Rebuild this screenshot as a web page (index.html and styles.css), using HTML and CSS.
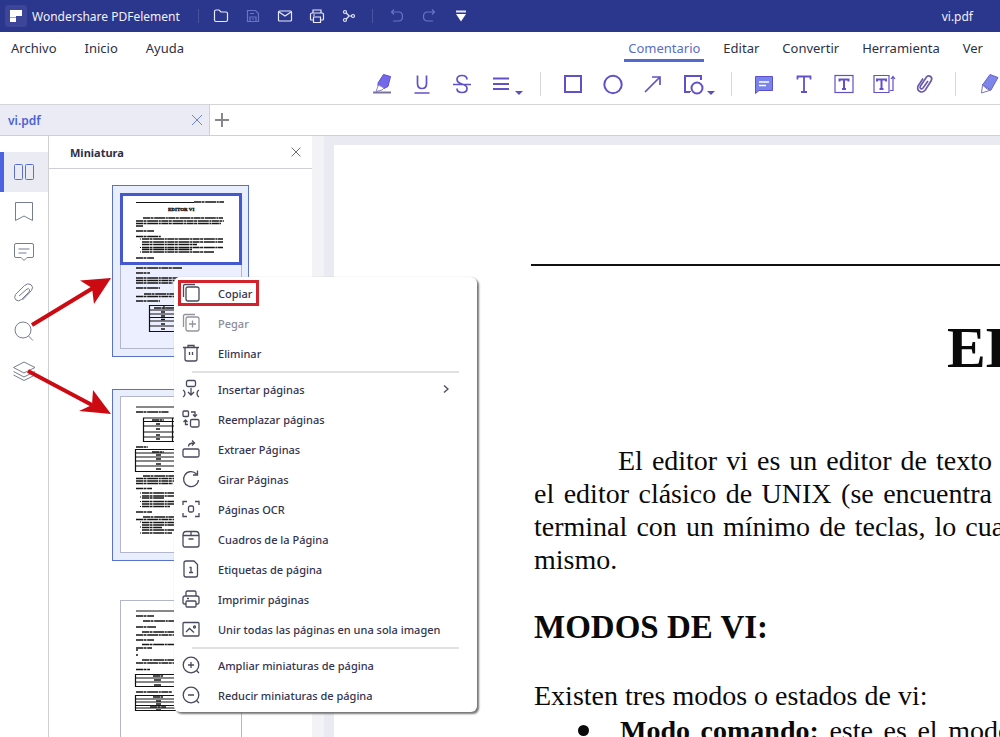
FILE: index.html
```html
<!DOCTYPE html>
<html lang="es">
<head>
<meta charset="utf-8">
<title>Wondershare PDFelement</title>
<link rel="stylesheet" href="styles.css">
</head>
<body>
<div class="app">
  <header class="titlebar">
    <svg class="logo" viewBox="0 0 22 22"><rect width="22" height="22" rx="3" fill="#3c4598"/><path d="M5 5h12v6h-6v1H5z" fill="#fff"/><path d="M5 12.500h6v4.500H5z" fill="#fff"/></svg>
    <span class="app-name">Wondershare PDFelement</span>
    <span class="bar-sep"></span>
    <button class="tb" aria-label="Abrir"><svg viewBox="0 0 16 16"><path d="M1.500 3.500q0-1.500 1.500-1.500h3l2 2h5q1.500 0 1.500 1.500v6.500q0 1.500-1.500 1.500H3q-1.500 0-1.500-1.500z"/></svg></button>
    <button class="tb dim" aria-label="Guardar"><svg viewBox="0 0 16 16"><path d="M2.500 2.500h8l3 3v8h-11zM5 13.500V9h6v4.500M5 5.500h4M7 11h2"/></svg></button>
    <button class="tb" aria-label="Correo"><svg viewBox="0 0 16 16"><rect x="1.500" y="3" width="13" height="10" rx="1"/><path d="M2 4l6 4 6-4"/></svg></button>
    <button class="tb" aria-label="Imprimir"><svg viewBox="0 0 16 16"><path d="M4 5V2h8v3M4 12H2.500q-1 0-1-1V6.500q0-1.500 1.500-1.500h10q1.500 0 1.500 1.500V11q0 1-1 1H12"/><path d="M4.500 9h7v5.500h-7zM4 7h2"/></svg></button>
    <button class="tb" aria-label="Compartir"><svg viewBox="0 0 16 16"><circle cx="4" cy="4" r="1.500"/><circle cx="4" cy="12" r="1.500"/><circle cx="12" cy="8" r="1.500"/><path d="M5.200 5l3 3-3 3M8 8h2.500"/></svg></button>
    <span class="bar-sep second"></span>
    <button class="tb dim" aria-label="Deshacer"><svg viewBox="0 0 16 16"><path d="M5 1.500L2.500 4 5 6.500M3 4h6.500q4 0 4 4.500t-4 4.500H4"/></svg></button>
    <button class="tb dim" aria-label="Rehacer"><svg viewBox="0 0 16 16"><path d="M11 1.500L13.500 4 11 6.500M13 4H6.500q-4 0-4 4.500t4 4.500H12"/></svg></button>
    <button class="tb" aria-label="Más"><svg viewBox="0 0 16 16"><path d="M3 3.500h10" stroke-width="2"/><path d="M3 6h10L8 13.500z" fill="#fff" stroke="none"/></svg></button>
    <span class="file-name">vi.pdf</span>
  </header>

  <nav class="menubar">
    <div class="menu-left"><button>Archivo</button><button>Inicio</button><button>Ayuda</button></div>
    <div class="menu-right"><button class="active">Comentario</button><button>Editar</button><button>Convertir</button><button>Herramienta</button><button>Ver</button></div>
  </nav>

  <div class="toolbar">
    <button aria-label="Resaltar"><svg viewBox="0 0 24 24"><path d="M8 11l5.500-8.500 7 2-2.500 10-4 2-6-2.500z" fill="#7468ea" stroke="#5c4ed0" stroke-width="1"/><path d="M8.500 13l-2.500 6.500 6-1.500 2-2z" fill="#fff" stroke="#8d84ce" stroke-width="1"/><path d="M3 20.500h18" stroke="#77739a" stroke-width="2"/></svg></button>
    <button aria-label="Subrayar"><svg viewBox="0 0 24 24"><path d="M7.500 3.500v8q0 5 4.500 5t4.500-5v-8M4.500 21h15" stroke-width="1.700"/></svg></button>
    <button aria-label="Tachar"><svg viewBox="0 0 24 24"><path d="M17 7.500q0-4-5-4T7 7.500q0 3 5 4.500t5 4.500q0 4-5 4t-5-4M3 12.500h18" stroke-width="1.700"/></svg></button>
    <button aria-label="Líneas"><svg viewBox="0 0 24 24"><path d="M3 6.500h16M3 12h16M3 17h16"/><path d="M25 19h8l-4 4z" fill="#5f4cc0" stroke="none"/></svg></button>
    <span class="tool-sep"></span>
    <button aria-label="Rectángulo"><svg viewBox="0 0 24 24"><rect x="4" y="4" width="16" height="16"/></svg></button>
    <button aria-label="Círculo"><svg viewBox="0 0 24 24"><circle cx="12" cy="12.500" r="8.700"/></svg></button>
    <button aria-label="Flecha"><svg viewBox="0 0 24 24"><path d="M4 20L19 5M11 5h8v8" stroke-width="1.700"/></svg></button>
    <button aria-label="Formas"><svg viewBox="0 0 24 24"><path d="M9 20H4V4h16v4M9 20v-1"/><circle cx="16" cy="16" r="5.500"/><path d="M26 19h8l-4 4z" fill="#5f4cc0" stroke="none"/></svg></button>
    <span class="tool-sep"></span>
    <button aria-label="Nota"><svg viewBox="0 0 24 24"><path d="M3.500 4.500h17v14H7l-3.500 3z" fill="#7a82ec" stroke="#5b50cf" stroke-width="1"/><path d="M7 10h10M7 13.500h7" stroke="#fff" stroke-width="1.500"/></svg></button>
    <button aria-label="Texto"><svg viewBox="0 0 24 24"><path d="M5.500 7.500V4.500h13v3M12 4.500v15M9 20h6" stroke-width="1.800"/></svg></button>
    <button aria-label="Cuadro de texto"><svg viewBox="0 0 24 24"><rect x="3" y="3.500" width="18" height="17" stroke-width="1.200"/><path d="M7.500 9.500V7.500h9v2M12 7.500v9M10 17h4"/></svg></button>
    <button aria-label="Llamada de texto"><svg viewBox="0 0 24 24"><path d="M17 20.500H2v-17h15zM18 18.500h3V5M19 7l2-2.500L23 7" stroke-width="1.200"/><path d="M5 9.500V7.500h9v2M9.500 7.500v9M7.500 17h4"/></svg></button>
    <button aria-label="Adjuntar"><svg viewBox="0 0 24 24"><path d="M16 9l-5 7q-1.500 1.500-2.500 .5t0-2.500l6-9q2-2 4-.5t.8 4l-6 9.500q-2.500 3-5.500 1.500T6 14l5-7.500" stroke="#6b5aad" stroke-width="1.700"/></svg></button>
    <span class="tool-sep last"></span>
    <button aria-label="Lápiz"><svg viewBox="0 0 24 24"><path d="M5.500 13L13 2.500l8 3L14 18z" fill="#7d86ea" stroke="#6a61c4" stroke-width="1"/><path d="M5.500 13l-1 8L14 18l-4-1z" fill="#fff" stroke="#7a74b5" stroke-width="1"/></svg></button>
  </div>

  <div class="tabs">
    <div class="tab"><span>vi.pdf</span><button aria-label="Cerrar pestaña"><svg viewBox="0 0 12 12"><path d="M1 1l10 10M11 1L1 11"/></svg></button></div>
    <button class="new-tab" aria-label="Nueva pestaña"><svg viewBox="0 0 14 14"><path d="M7 0v14M0 7h14"/></svg></button>
  </div>

  <main class="workspace">
    <nav class="rail">
      <button class="current" aria-label="Miniaturas"><svg viewBox="0 0 24 24"><rect x="2.500" y="4.500" width="8" height="15" rx="1"/><rect x="13.500" y="4.500" width="8" height="15" rx="1"/></svg></button>
      <button aria-label="Marcadores"><svg viewBox="0 0 24 24"><path d="M3.500 2.500h17v18L12 16l-8.500 4.500z"/></svg></button>
      <button aria-label="Comentarios"><svg viewBox="0 0 24 24"><path d="M4 3.500h16q1.500 0 1.500 1.500v11q0 1.500-1.500 1.500h-5L12 20.500l-3-3H4q-1.500 0-1.500-1.500V5q0-1.500 1.500-1.500zM6.500 9h11M6.500 13h8"/></svg></button>
      <button aria-label="Adjuntos"><svg viewBox="0 0 24 24"><path d="M7 16l8-7q2-1 2.500 .5t-1 3l-7 7q-3 2.500-5.500 .5t-.5-5.500l9-9q3.500-3 6.500-.8t.5 5.800l-9 9.500"/></svg></button>
      <button aria-label="Buscar"><svg viewBox="0 0 24 24"><circle cx="11" cy="10" r="8"/><path d="M16.500 16l4.500 4.500"/></svg></button>
      <button aria-label="Capas"><svg viewBox="0 0 24 24"><path d="M1.500 7.500L12 2l11 5.500L12 13zM1.500 11.500L12 17l11-5.500M1.500 15L12 20.500 23 15"/></svg></button>
    </nav>

    <section class="panel">
      <div class="panel-head"><h2>Miniatura</h2><button aria-label="Cerrar"><svg viewBox="0 0 12 12"><path d="M1.500 1.500l9 9M10.500 1.500l-9 9"/></svg></button></div>
      <div class="thumbs">
        <div class="thumb selected">
          <svg viewBox="112 185 137 172">
            <rect x="120.500" y="193.500" width="121" height="155" fill="#ecefff" stroke="#b3b6c9"/>
            <rect x="121.500" y="194.500" width="119" height="69" fill="#fff" stroke="#4459cf" stroke-width="3"/>
            <path class="rule" d="M136 202.500h58"/>
            <path class="ink" d="M194 202h30"/>
            <text x="168" y="211" class="mini-title">EDITOR VI</text>
            <path class="ink" d="M143 218h80M136 221h88M136 223.500h85M136 226h7M136 231h18M136 236.500h25M142 239h81M142 242h81M142 244.500h55M142 247.500h81M142 249.500h50M142 252h72M136 258h18M136 268h46M136 273h14M136 278h42M136 280.500h40M136 283h37M136 288h24M144 294h32M136 296.500h38M136 301h24"/>
            <path class="dots" d="M140 239h1M140 247.500h1M140 252h1"/>
            <path class="grid" d="M149 305.500h30M149 310h30M149 314h30M149 317.500h30M149 321h30M149 326h30M149 331.500h30M149.500 305v27M164 305v4"/>
            <path class="ink" d="M154 308h20M161 312h4M161 316h4M161 319.500h4M161 324h4M161 329h4"/>
          </svg>
        </div>
        <div class="thumb selected">
          <svg viewBox="112 389 137 172">
            <rect x="120.500" y="396.500" width="121" height="156" fill="#fff" stroke="#b3b6c9"/>
            <path class="rule" d="M136 407h50"/>
            <path class="ink" d="M136 412h33M136 447h12M143 476h34M136 478.500h40M136 481h40M136 483.500h37M136 488.500h16M142 493h34M142 496h36M142 498h22M142 501.500h32M142 504h34M142 506.500h28M136 512h16M143 517h32M136 519.500h40M142 522.500h34M142 525h36M142 527.500h20M142 530h33M142 533h30"/>
            <path class="dots" d="M140 493h1M140 497h1M140 501.500h1M140 506.500h1M140 522h1M140 527h1M140 533h1"/>
            <path class="grid" d="M143 418h40M143 421.500h40M143 426h40M143 432h40M143 437h40M143 441.500h40M143.500 418v24M172.500 418v24M135 449.500h50M135 453h50M135 457h50M135 461h50M135 466h50M135 471.500h50M135.500 449v23"/>
            <path class="ink" d="M152 420h12M156 424h4M156 429h4M156 435h4M156 439h4M152 452h12M156 455h5M156 459h5M156 464h5M156 469h5"/>
          </svg>
        </div>
        <div class="thumb">
          <svg viewBox="112 593 137 172">
            <rect x="120.500" y="600.500" width="121" height="156" fill="#fff" stroke="#b3b6c9"/>
            <path class="rule" d="M136 611h50"/>
            <path class="ink" d="M136 616h18M143 621h34M136 627h20M142 632h34M136 635h40M136 640h18M142 644.500h36M136 648h16M136 650h2M136 655h2M142 660h34M136 663h40M136 669.500h14M136 692h36"/>
            <path class="grid" d="M135 674.500h50M135 678h50M135 682h50M135 686.500h50M135.500 674v13M135 695.500h50M135 699h50M135 702h50M135 705.500h50M135 708h50M135 710.500h50M135.500 695v16"/>
            <path class="ink" d="M153 676h10M154 680h7M154 685h7M153 697h10M156 701h5M156 704h5M150 707h16M156 710h5"/>
          </svg>
        </div>
      </div>
    </section>

    <div class="scroll-track"></div>

    <section class="document">
      <article class="page">
        <hr>
        <h1>EDITOR VI</h1>
        <p class="justified"><span class="line first">El editor vi es un editor de texto</span><span class="line">el editor clásico de UNIX (se encuentra</span><span class="line long">terminal con un mínimo de teclas, lo cual</span><span>mismo.</span></p>
        <h2>MODOS DE VI:</h2>
        <p>Existen tres modos o estados de vi:</p>
        <ul><li><span><b>Modo comando:</b> este es el modo</span></li></ul>
      </article>
    </section>
  </main>
</div>

<div class="context-menu" role="menu">
  <button class="marked"><svg viewBox="0 0 20 20"><path d="M2.500 14V3q0-1.500 1.500-1.500h10"/><rect x="5" y="4" width="13" height="14" rx="2"/></svg><span>Copiar</span></button>
  <button class="off"><svg viewBox="0 0 20 20"><path d="M2.500 14V3q0-1.500 1.500-1.500h10"/><rect x="5" y="4" width="13" height="14" rx="2"/><path d="M11.500 7.500v7M8 11h7"/></svg><span>Pegar</span></button>
  <button><svg viewBox="0 0 20 20"><path d="M2 4.500h16M7 4V2.500h6V4M4 5v11q0 2 2 2h8q2 0 2-2V5M8.500 9v3M11.500 9v3"/></svg><span>Eliminar</span></button>
  <hr>
  <button><svg viewBox="0 0 20 20"><rect x="5.500" y="1.500" width="9" height="6" rx="1.500"/><path d="M10 9v6.500M7 13l3 3 3-3M2 11q2 1 2 3.500T2 18M18 11q-2 1-2 3.500t2 3.500"/></svg><span>Insertar páginas</span><svg class="chevron" viewBox="0 0 8 10"><path d="M2 1.500L6 5 2 8.500"/></svg></button>
  <button><svg viewBox="0 0 20 20"><rect x="2" y="2" width="5.500" height="5.500" rx="1"/><rect x="9.500" y="10.500" width="8.500" height="7.500" rx="1.500"/><path d="M10 3h4v4M12 5.500l2 2 2-2M7 15.500H4.500v-4M2.500 13l2-2 2 2"/></svg><span>Reemplazar páginas</span></button>
  <button><svg viewBox="0 0 20 20"><rect x="2" y="10" width="16" height="8" rx="1.500"/><path d="M7.500 7.500Q7.500 4 13 4M11 1.500L13.500 4 11 6.500"/></svg><span>Extraer Páginas</span></button>
  <button><svg viewBox="0 0 20 20"><path d="M15.500 5A7.500 7.500 0 1 0 17.500 11M16.500 1.500v4.500h-4.500"/></svg><span>Girar Páginas</span></button>
  <button><svg viewBox="0 0 20 20"><path d="M2 6V2.500h4M14 2.500h4V6M18 14v3.500h-4M6 17.500H2V14"/><rect x="7.500" y="7" width="5" height="6" rx="1.500"/></svg><span>Páginas OCR</span></button>
  <button><svg viewBox="0 0 20 20"><path d="M2 6.500h16v9.500q0 2-2 2H4q-2 0-2-2zM2 6.500q0-4 3-4h10q3 0 3 4M7.500 10h5M10 2.500v4"/></svg><span>Cuadros de la Página</span></button>
  <button><svg viewBox="0 0 20 20"><path d="M5 2h8l3.500 3.500V16q0 2-2 2H5q-2 0-2-2V4q0-2 2-2zM8.500 8.500H10V13M8 13.500h4"/></svg><span>Etiquetas de página</span></button>
  <button><svg viewBox="0 0 20 20"><path d="M5 7V3.500Q5 2 6.500 2h7Q15 2 15 3.500V7M5 15H3.500Q2 15 2 13.500V9q0-2 2-2h12q2 0 2 2v4.500q0 1.500-1.500 1.500H15M6 9.500h2"/><rect x="5" y="12" width="10" height="6" rx="1"/></svg><span>Imprimir páginas</span></button>
  <button><svg viewBox="0 0 20 20"><rect x="2" y="3.500" width="16" height="13.500" rx="1"/><path d="M5 13l3.500-3.500 4.500 4"/><circle cx="13.500" cy="8" r="1"/></svg><span>Unir todas las páginas en una sola imagen</span></button>
  <hr>
  <button><svg viewBox="0 0 20 20"><circle cx="10" cy="10" r="7.800"/><path d="M10 7v6M7 10h6M15.500 15.500l2.500 2.500"/></svg><span>Ampliar miniaturas de página</span></button>
  <button><svg viewBox="0 0 20 20"><circle cx="10" cy="10" r="7.800"/><path d="M7 10h6M15.500 15.500l2.500 2.500"/></svg><span>Reducir miniaturas de página</span></button>
</div>

<svg class="arrows" viewBox="0 0 120 420" aria-hidden="true">
  <path d="M32 325L93 288M28 371L92 405" stroke="#cc0a12" stroke-width="4"/>
  <path d="M111 278L80 280.500 92 288 94 304zM111 414L93 390 92 405 79 411z" fill="#cc0a12"/>
</svg>
</body>
</html>
```
FILE: styles.css
```css
*, *::before, *::after { box-sizing: border-box; }
body {
  margin: 0;
  font-family: "Noto Sans", "Open Sans", sans-serif;
  font-size: 13px;
  color: #2d2f45;
  background: #fff;
}
button {
  margin: 0;
  padding: 0;
  border: 0;
  background: none;
  font: inherit;
  color: inherit;
}
svg { display: block; fill: none; flex: none; }
.app {
  height: 100vh;
  display: flex;
  flex-direction: column;
  overflow: hidden;
}

/* Title bar */
.titlebar {
  height: 32px;
  flex: none;
  display: flex;
  align-items: center;
  padding: 0 27px 0 5px;
  background: #2b368d;
  color: #f0f1fa;
  font-size: 12px;
}
.logo { width: 22px; height: 22px; }
.app-name { width: 166px; padding-left: 5px; white-space: nowrap; }
.bar-sep { width: 1px; height: 14px; margin: 0 6px 0 5px; background: #4a539e; }
.bar-sep.second { margin: 0 8px 0 7px; }
.tb { width: 32px; height: 32px; display: grid; place-items: center; }
.tb svg { width: 16px; height: 16px; stroke: #e8eafc; stroke-width: 1.2; }
.tb.dim svg { stroke: #6a74c4; }
.file-name { margin-left: auto; }

/* Menu bar */
.menubar {
  flex: none;
  display: flex;
  justify-content: space-between;
  padding: 0 17px 0 11px;
}
.menu-left { display: flex; gap: 28px; }
.menu-right { display: flex; gap: 23px; }
.menubar button { height: 32px; white-space: nowrap; }
.menubar .active {
  height: 30px;
  margin: 0 -4px;
  padding: 2px 4px 0;
  color: #5a6cc8;
  box-shadow: 0 -3px 0 #5468d4 inset;
}

/* Tools */
.toolbar {
  flex: none;
  display: flex;
  align-items: center;
  height: 41px;
  padding-left: 362px;
  border-bottom: 1px solid #d4d4da;
}
.toolbar button { width: 40px; height: 40px; flex: none; display: grid; place-items: center; }
.toolbar svg { width: 24px; height: 24px; overflow: visible; stroke: #6250c8; stroke-width: 2; }
.tool-sep { width: 1px; height: 24px; margin: 0 12px 0 18px; flex: none; background: #d6d6dc; }
.tool-sep.last { margin: 0 13px 0 11px; }

/* Document tabs */
.tabs { flex: none; display: flex; height: 31px; border-bottom: 1px solid #cfcfd6; }
.tab {
  width: 210px;
  display: flex;
  align-items: center;
  justify-content: space-between;
  padding: 0 6px 0 8px;
  background: #ebebf5;
  border-right: 1px solid #cfcfd6;
  color: #4a63d2;
  font-size: 12px;
  font-weight: 600;
}
.tab svg { width: 12px; height: 12px; stroke: #6d83cc; }
.new-tab { display: grid; place-items: center; width: 24px; }
.new-tab svg { width: 14px; height: 14px; stroke: #85868f; stroke-width: 2; }

/* Workspace */
.workspace { flex: 1; min-height: 0; display: flex; }
.rail { width: 49px; flex: none; padding-top: 16px; border-right: 1px solid #cfcfd8; }
.rail button { display: grid; place-items: center; width: 48px; height: 40px; }
.rail svg { width: 24px; height: 24px; stroke: #777d90; }
.rail .current { background: #ebebf3; box-shadow: 4px 0 0 #4c63e2 inset; }
.rail .current svg { stroke: #5a70cf; }
.panel { width: 263px; flex: none; overflow: hidden; }
.panel-head {
  height: 33px;
  display: flex;
  align-items: center;
  justify-content: space-between;
  padding: 0 10px 0 21px;
  border-bottom: 1px solid #cfcfd8;
}
.panel-head h2 { margin: 0; font-size: 11px; font-weight: 700; }
.panel-head svg { width: 12px; height: 12px; stroke: #6d7080; }
.thumbs { display: flex; flex-direction: column; align-items: center; gap: 32px; padding-top: 16px; }
.thumb svg { width: 137px; height: 172px; }
.thumb.selected { background: #e9eefc; outline: 1px solid #5a70cf; outline-offset: -1px; }
.rule { stroke: #111; stroke-width: 1; }
.ink { stroke: #151515; stroke-width: 1.7; stroke-dasharray: 7 .5 3 .7 11 .6 2 .5; }
.dots { stroke: #111; stroke-width: 1; }
.grid { stroke: #111; stroke-width: 1.2; }
.mini-title { font: bold 5px "Liberation Serif", serif; fill: #111; stroke: #111; stroke-width: .4; }
.scroll-track { width: 12px; flex: none; background: #f3f3f6; }

/* Page view */
.document { flex: 1; min-width: 0; overflow: hidden; padding: 9px 0 0 10px; background: #eaeaf3; }
.page {
  min-height: 100%;
  padding: 119px 0 0 200px;
  background: #fff;
  font-family: "Liberation Serif", serif;
  font-size: 28px;
  line-height: 33px;
  color: #0a0a0a;
  white-space: nowrap;
}
.page hr { height: 2px; margin: 0 0 0 -3px; border: 0; background: #111; }
.page h1 { margin: 50px 0 64px 413px; font-size: 58px; line-height: 64px; }
.page p { margin: 0; }
.page h2 { margin: 33px 0; font-size: 33px; line-height: 37px; }
.justified span { display: block; }
.justified .line { white-space: normal; text-align-last: justify; margin-right: 8px; }
.justified .first { padding-left: 84px; }
.justified .long { margin-right: -12px; }
.page ul { margin: 2px 0 0; padding: 0; list-style: none; }
.page li { display: flex; align-items: center; gap: 31px; padding-left: 44px; margin-right: -12px; }
.page li::before { content: ""; width: 11px; height: 11px; flex: none; border-radius: 50%; background: #0a0a0a; }
.page li span { flex: 1; white-space: normal; text-align-last: justify; }

/* Context menu */
.context-menu {
  position: absolute;
  left: 174px;
  top: 277px;
  width: 303px;
  padding: 1px 0 2px;
  border-radius: 6px;
  background: #fff;
  box-shadow: 2px 2px 2px #777, 0 0 1px #aaa;
  font-size: 11px;
  font-weight: 500;
  color: #33344e;
}
.context-menu button {
  width: 100%;
  height: 30px;
  display: flex;
  align-items: center;
  gap: 17px;
  padding: 0 27px 0 7px;
  text-align: left;
  white-space: nowrap;
}
.context-menu svg { width: 20px; height: 20px; stroke: #474a5c; stroke-width: 1.3; }
.context-menu .off { color: #8c8c98; }
.context-menu .off svg { stroke: #94949c; }
.context-menu .chevron { width: 8px; height: 10px; margin-left: auto; }
.context-menu hr { height: 2px; margin: 3px 18px 1px; border: 0; background: #e1e1e4; }
.context-menu .marked { position: relative; }
.context-menu .marked::after {
  content: "";
  position: absolute;
  left: 4px;
  top: 2px;
  width: 81px;
  height: 26px;
  border: 3px solid #d3222c;
}
.arrows { position: absolute; left: 0; top: 0; width: 120px; height: 420px; pointer-events: none; }
```
